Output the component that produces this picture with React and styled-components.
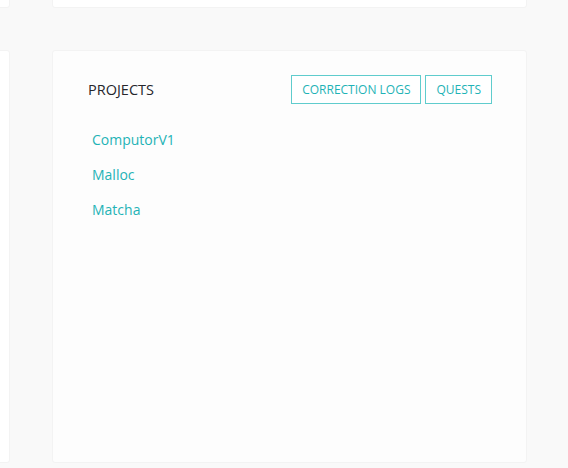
import React from "react";
import styled, { createGlobalStyle } from "styled-components";

const GlobalStyle = createGlobalStyle`
  html, body {
    margin: 0;
    padding: 0;
    background: #f9f9f9;
    font-family: "Open Sans", "Liberation Sans", sans-serif;
  }
`;

const Page = styled.div`
  width: 568px;
  height: 468px;
  overflow: hidden;
  display: grid;
  grid-template-columns: 10px 475px;
  grid-template-rows: 8px 413px;
  column-gap: 42px;
  row-gap: 42px;
`;

const Card = styled.div`
  background: ${(p) => (p.$soft ? "#fdfdfd" : "#ffffff")};
  border: 1px solid #f3f3f3;
  border-radius: 3px;
  box-sizing: border-box;
  margin-top: ${(p) => (p.$cut ? "-4px" : "0")};
  margin-left: ${(p) => (p.$edge ? "-4px" : "0")};
`;

const ProjectsCard = styled(Card)`
  padding: 24px 34px 0 35px;
  display: flex;
  flex-direction: column;
`;

const Header = styled.div`
  display: flex;
  align-items: center;
  justify-content: space-between;
  height: 29px;
`;

const Title = styled.h2`
  margin: 0;
  font-size: 14.5px;
  font-weight: 400;
  color: #26262b;
`;

const Actions = styled.div`
  display: flex;
  gap: 4px;
`;

const Button = styled.button`
  height: 29px;
  padding: 0 10px;
  background: #fff;
  border: 1px solid #5fcccd;
  border-radius: 0;
  color: #1fb3b6;
  font-family: inherit;
  font-size: 12px;
  text-transform: uppercase;
  cursor: pointer;
`;

const List = styled.ul`
  list-style: none;
  margin: 26px 0 0;
  padding: 0 0 0 4px;
  display: flex;
  flex-direction: column;
  gap: 15px;
`;

const Link = styled.a`
  display: block;
  height: 20px;
  line-height: 20px;
  font-size: 14px;
  color: #1fb3b6;
  text-decoration: none;
`;

const projects = ["ComputorV1", "Malloc", "Matcha"];

export default function App() {
  return (
    <>
      <GlobalStyle />
      <Page>
        <Card $cut $edge />
        <Card $cut />
        <Card $edge />
        <ProjectsCard $soft>
          <Header>
            <Title>PROJECTS</Title>
            <Actions>
              <Button>Correction logs</Button>
              <Button>Quests</Button>
            </Actions>
          </Header>
          <List>
            {projects.map((name) => (
              <li key={name}>
                <Link href="#">{name}</Link>
              </li>
            ))}
          </List>
        </ProjectsCard>
      </Page>
    </>
  );
}
